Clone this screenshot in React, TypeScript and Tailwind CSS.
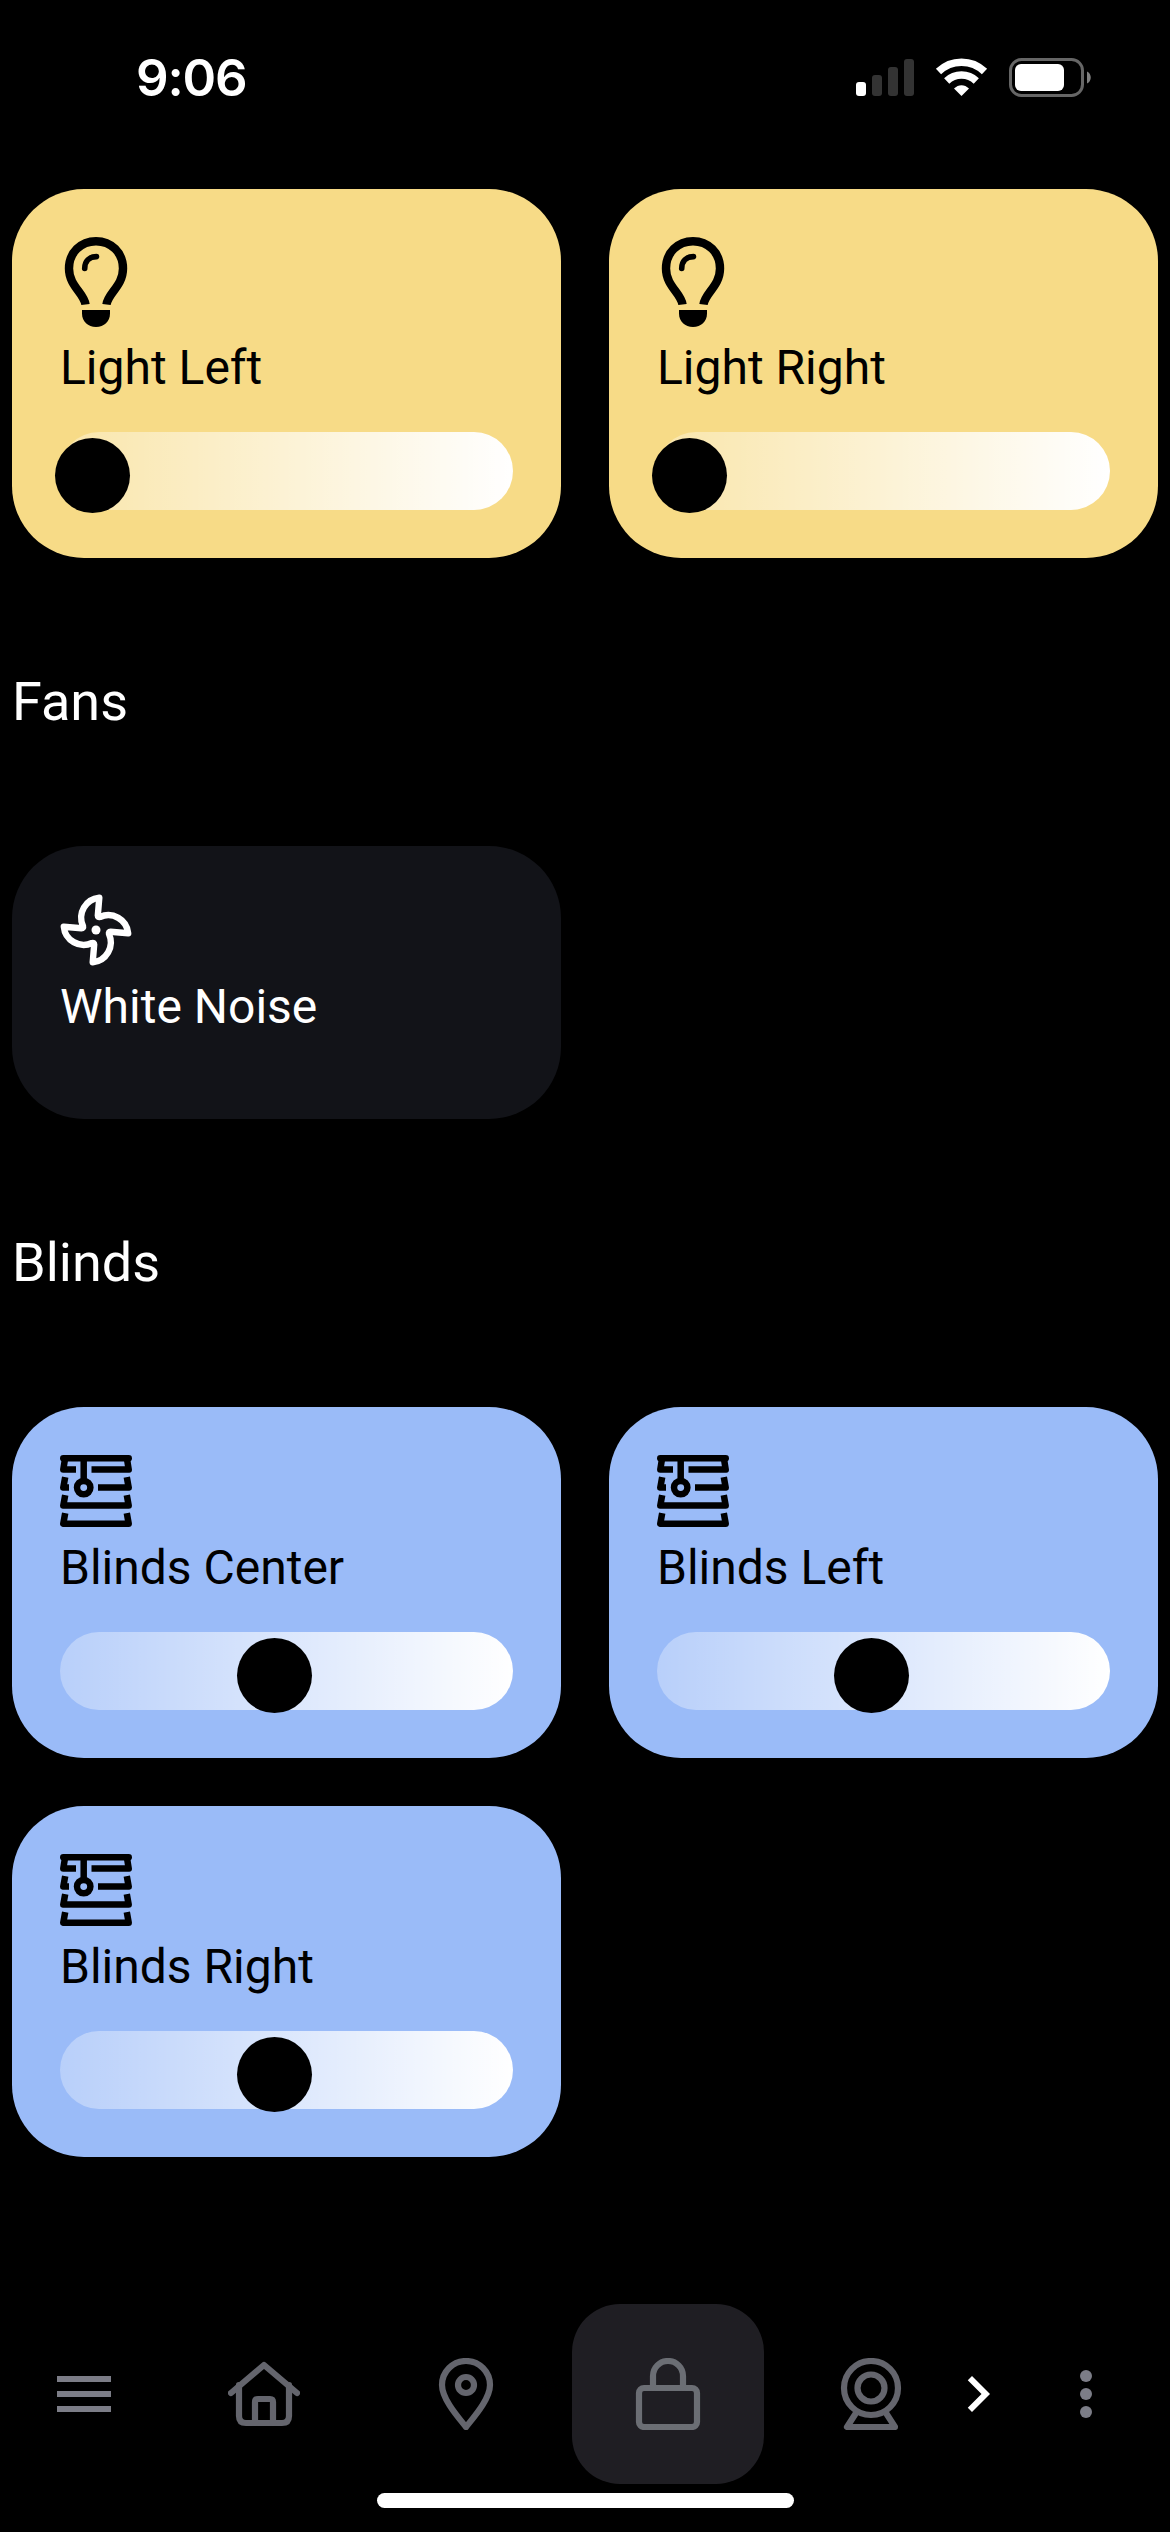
import React from 'react';

interface Device {
  name: string;
  icon: React.FC;
  level?: number;
}

const BulbIcon: React.FC = () => (
  <svg width="72" height="90" viewBox="60 237 72 90" fill="none" stroke="currentColor">
    <path d="M85.5 304.5C84 293 69 286 69 268.5C69 252.5 81 241.2 96 241.2C111 241.2 123 252.5 123 268.5C123 286 108 293 106.5 304.5" strokeWidth="8.4" />
    <path d="M84.7 268.5C84.7 261 89.5 256.6 96.5 256.6" strokeWidth="5.6" strokeLinecap="round" />
    <path d="M82 310h28v3.5c0 8-6 13.5-14 13.5s-14-5.5-14-13.5z" fill="currentColor" stroke="none" />
  </svg>
);

const FanIcon: React.FC = () => (
  <svg width="72" height="72" viewBox="0 0 72 72" fill="none" stroke="currentColor" strokeWidth="6.4" strokeLinejoin="round">
    <path d="M39.3 3.8L37.8 21.5Q37.8 23.5 40 23A20 20 0 0 1 68.2 39.3L50.500 37.8Q48.500 37.8 49 40A20 20 0 0 1 32.700 68.200L34.200 50.500Q34.200 48.500 32 49A20 20 0 0 1 3.800 32.700L21.500 34.200Q23.500 34.200 23 32A20 20 0 0 1 39.300 3.800Z" />
    <circle cx="36" cy="36" r="4.5" fill="currentColor" stroke="none" />
  </svg>
);

const BlindsIcon: React.FC = () => (
  <svg width="72" height="72" viewBox="0 0 72 72" fill="none" stroke="currentColor" strokeWidth="6.5" strokeLinejoin="round">
    <path d="M3.3 3.3H68.7" strokeLinecap="round" />
    <path d="M16 14.6H3.3L5 4M67 4l1.7 10.6H31.5" />
    <path d="M5.2 22.2L3.3 32.6H9M66.8 22.2l1.900 10.4H38" />
    <path d="M5.2 40.2L3.3 50.6H68.7l-1.900-10.400M5.200 58.200L3.300 68.700H68.700l-1.900-10.500" />
    <path d="M23.7 4v20" />
    <circle cx="23.7" cy="32.6" r="6.7" />
  </svg>
);

const lights: Device[] = [
  { name: 'Light Left', icon: BulbIcon, level: 0 },
  { name: 'Light Right', icon: BulbIcon, level: 0 },
];

const fans: Device[] = [{ name: 'White Noise', icon: FanIcon }];

const blinds: Device[] = [
  { name: 'Blinds Center', icon: BlindsIcon, level: 182 },
  { name: 'Blinds Left', icon: BlindsIcon, level: 182 },
  { name: 'Blinds Right', icon: BlindsIcon, level: 182 },
];

const Slider: React.FC<{ level: number }> = ({ level }) => (
  <div className="relative h-[78px] rounded-full bg-linear-to-r from-white/30 to-white">
    <div
      className="absolute top-[6px] -ml-[5px] h-[75px] w-[75px] rounded-full bg-black"
      style={{ left: level }}
    />
  </div>
);

const DeviceGrid: React.FC<{ devices: Device[]; color: string }> = ({ devices, color }) => (
  <div className="grid grid-cols-2 gap-12 px-3">
    {devices.map(({ name, icon: Icon, level }) => (
      <div key={name} className={`rounded-[72px] p-12 ${color}`}>
        <Icon />
        <div className="mt-3 mb-9 text-[48px] leading-[57px] whitespace-nowrap">{name}</div>
        {level !== undefined && <Slider level={level} />}
      </div>
    ))}
  </div>
);

const Heading: React.FC<{ children: React.ReactNode }> = ({ children }) => (
  <h2 className="h-[288px] px-3 pt-[112px] text-[54px] leading-[64px] text-white">{children}</h2>
);

const StatusBar: React.FC = () => (
  <header className="flex h-[189px] justify-between pt-[48px] pr-[78px] pl-[136px] text-white">
    <div className="font-['Inter'] text-[51px] leading-[60px] font-semibold tracking-[-1.2px]">9:06</div>
    <svg width="236" height="60" viewBox="856 48 236 60" fill="none">
      <rect x="856" y="82" width="10" height="14" rx="3" fill="#fff" />
      <rect x="872" y="75" width="10" height="21" rx="3" fill="#333" />
      <rect x="888" y="67" width="10" height="29" rx="3" fill="#333" />
      <rect x="904" y="59" width="10" height="37" rx="3" fill="#333" />
      <path d="M938.5 71.5A33 33 0 0 1 984.5 71.5M946.7 81A21.5 21.5 0 0 1 976.3 81" stroke="#fff" strokeWidth="7.5" />
      <path d="M954 88.5c4.5-4.5 10.5-4.5 15 0l-7.5 7.5z" fill="#fff" />
      <rect x="1010.5" y="59.5" width="72" height="36" rx="11" stroke="#666" strokeWidth="3" />
      <rect x="1015" y="64" width="49" height="27" rx="6" fill="#fff" />
      <path d="M1087 71.5c5 2 5 10 0 12z" fill="#808080" />
    </svg>
  </header>
);

const tabs = [
  {
    id: 'home',
    active: false,
    shape: (
      <>
        <path d="M3 35L36 7L69 35" />
        <path d="M11 27v31q0 7 7 7H54q7 0 7-7V27" />
        <path d="M27 65V44q0-3 3-3H42q3 0 3 3V65" />
      </>
    ),
  },
  {
    id: 'location',
    active: false,
    shape: (
      <>
        <path d="M36 69C28 59 12 41 12 27a24 24 0 0 1 48 0C60 41 44 59 36 69z" />
        <circle cx="36" cy="27" r="8" />
      </>
    ),
  },
  {
    id: 'lock',
    active: true,
    shape: (
      <>
        <rect x="7" y="30" width="58" height="39" rx="5" />
        <path d="M21 30V18a15 15 0 0 1 30 0V30" />
      </>
    ),
  },
  {
    id: 'camera',
    active: false,
    shape: (
      <>
        <circle cx="37" cy="30" r="27" />
        <circle cx="37" cy="30" r="13.5" />
        <path d="M22 55L13 69H61L52 55" />
      </>
    ),
  },
];

const BottomNav: React.FC = () => (
  <nav className="mt-auto">
    <div className="flex h-[180px] items-center">
      <button className="w-[163px] pl-12 text-[#7c7d87]">
        <svg width="72" height="72" viewBox="0 0 24 24" fill="currentColor">
          <path d="M3 6h18v2H3V6m0 5h18v2H3v-2m0 5h18v2H3v-2z" />
        </svg>
      </button>
      {tabs.map(({ id, active, shape }) => (
        <div key={id} className="flex h-full w-[202px] justify-center">
          <button
            className={`flex h-full w-48 items-center justify-center rounded-[48px] ${active ? 'bg-[#1f1e23] text-[#6b6e74]' : 'text-[#64656d]'}`}
          >
            <svg width="72" height="72" viewBox="0 0 72 72" fill="none" stroke="currentColor" strokeWidth="6.2" strokeLinecap="round" strokeLinejoin="round">
              {shape}
            </svg>
          </button>
        </div>
      ))}
      <button className="-ml-[29px] text-white">
        <svg width="72" height="72" viewBox="0 0 24 24" fill="currentColor">
          <path d="M8.59 16.58L13.17 12L8.59 7.41L10 6l6 6l-6 6l-1.41-1.42z" />
        </svg>
      </button>
      <button className="ml-9 text-[#7c7d87]">
        <svg width="72" height="72" viewBox="0 0 24 24" fill="currentColor">
          <circle cx="12" cy="6" r="2" />
          <circle cx="12" cy="12" r="2" />
          <circle cx="12" cy="18" r="2" />
        </svg>
      </button>
    </div>
    <div className="mx-auto mt-[9px] mb-6 h-[15px] w-[417px] rounded-full bg-white" />
  </nav>
);

const App: React.FC = () => {
  return (
    <div className="flex h-[2532px] w-[1170px] flex-col overflow-hidden bg-black font-['Roboto',sans-serif]">
      <StatusBar />
      <DeviceGrid devices={lights} color="bg-[#f7db87] text-black" />
      <Heading>Fans</Heading>
      <DeviceGrid devices={fans} color="bg-[#121318] text-white" />
      <Heading>Blinds</Heading>
      <DeviceGrid devices={blinds} color="bg-[#9abbf8] text-black" />
      <BottomNav />
    </div>
  );
};

export default App;
